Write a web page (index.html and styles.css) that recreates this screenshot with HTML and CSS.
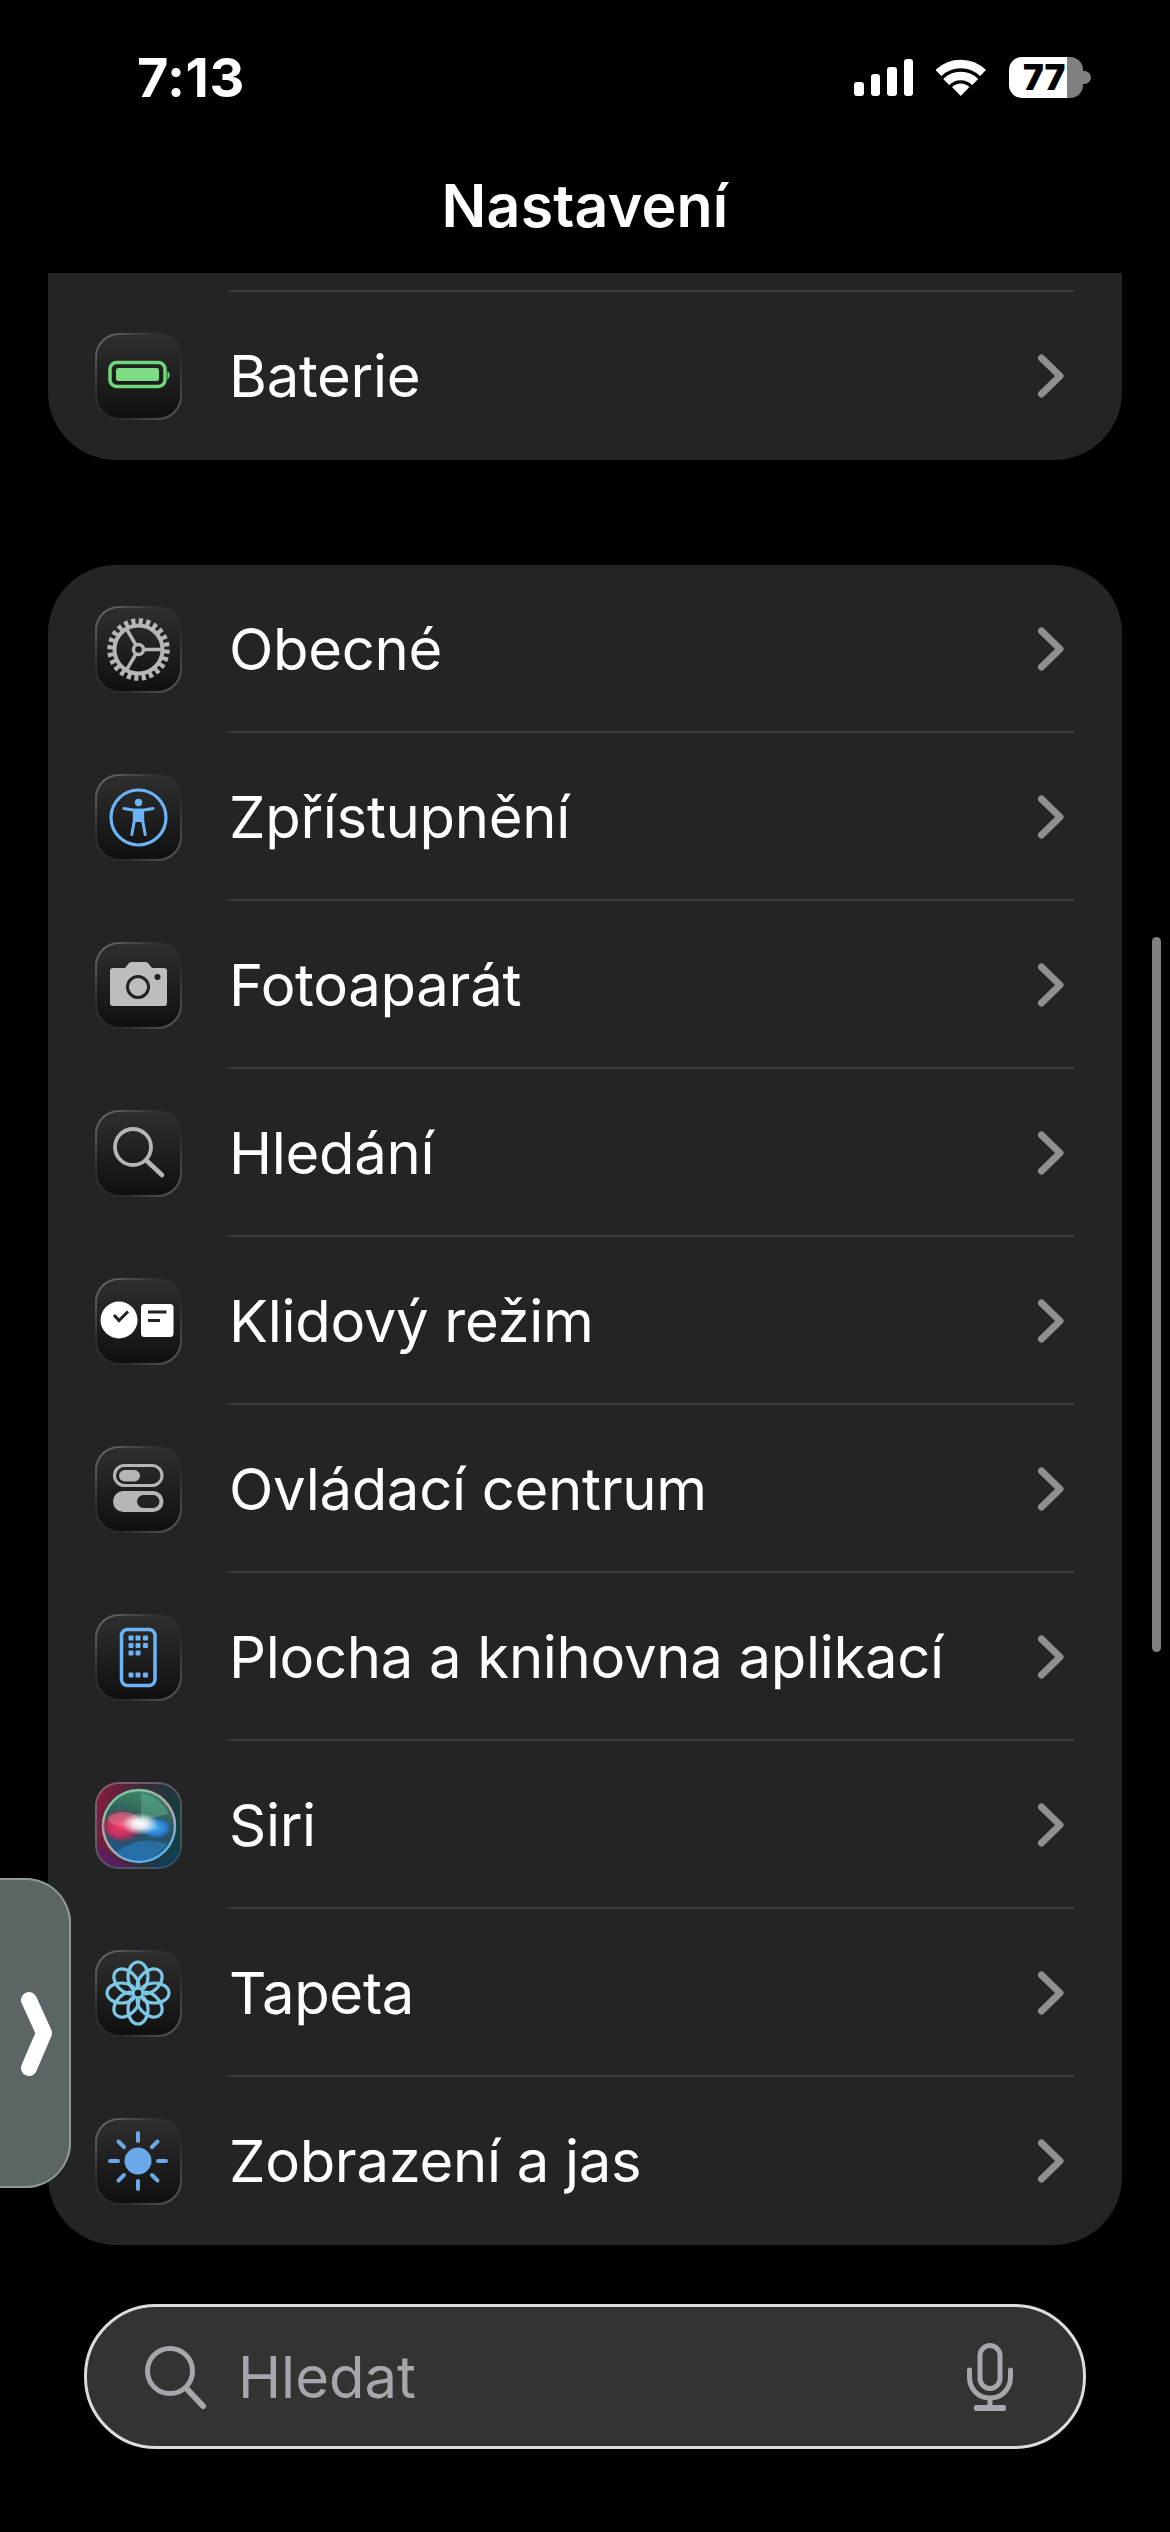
FILE: index.html
```html
<!DOCTYPE html>
<html lang="cs">
<head>
<meta charset="utf-8">
<title>Nastavení</title>
<link rel="stylesheet" href="styles.css">
</head>
<body>
<svg class="sprite" width="0" height="0" aria-hidden="true">
  <defs>
    <symbol id="chev" viewBox="0 0 30 48"><path d="M7.500 6 L26 24 L7.500 42" fill="none" stroke="#8e8e93" stroke-width="7" stroke-linecap="round" stroke-linejoin="round"/></symbol>
    <radialGradient id="siriRed" cx="0.45" cy="0.5" r="0.5"><stop offset="0" stop-color="#f8406e"/><stop offset=".65" stop-color="#d82c5c" stop-opacity=".85"/><stop offset="1" stop-color="#b02050" stop-opacity=".2"/></radialGradient>
    <radialGradient id="siriBlue" cx="0.5" cy="0.5" r="0.5"><stop offset="0" stop-color="#3fb0f8"/><stop offset=".7" stop-color="#2a80e0" stop-opacity=".8"/><stop offset="1" stop-color="#1a60c0" stop-opacity=".15"/></radialGradient>
    <radialGradient id="siriCore" cx="0.5" cy="0.5" r="0.5"><stop offset="0" stop-color="#fff"/><stop offset=".4" stop-color="#fff" stop-opacity=".85"/><stop offset="1" stop-color="#fff" stop-opacity="0"/></radialGradient>
    <linearGradient id="siriBg" x1="0" y1="0.2" x2="1" y2="0.4"><stop offset="0" stop-color="#8a1a40"/><stop offset=".5" stop-color="#3a2a3c"/><stop offset="1" stop-color="#123f3e"/></linearGradient>
    <linearGradient id="siriBall" x1="0.6" y1="0" x2="0.4" y2="1"><stop offset="0" stop-color="#3f8a6c"/><stop offset=".5" stop-color="#2c4f54"/><stop offset="1" stop-color="#1f5a92"/></linearGradient>
    <linearGradient id="siriRim" x1="0.2" y1="0" x2="0.8" y2="1"><stop offset="0" stop-color="#68d49c"/><stop offset=".5" stop-color="#c8a0a8"/><stop offset="1" stop-color="#44b4f4"/></linearGradient>
  </defs>
</svg>
<div class="screen">
  <header class="status">
    <span class="time">7:13</span>
    <div class="status-right">
      <div class="signal"><i class="bar bar1"></i><i class="bar bar2"></i><i class="bar bar3"></i><i class="bar bar4"></i></div>
      <svg class="wifi" width="50" height="38" viewBox="0 0 50 38"><path d="M2.400 14 A32 32 0 0 1 47 14" fill="none" stroke="#fff" stroke-width="8.500"/><path d="M10.200 23 A20.500 20.500 0 0 1 39.200 23" fill="none" stroke="#fff" stroke-width="8.500"/><path d="M24.700 37 L16 28 A12.500 12.500 0 0 1 33.400 28 Z" fill="#fff"/></svg>
      <div class="battery"><div class="battery-body"><span class="battery-num">77</span></div><i class="battery-cap"></i></div>
    </div>
  </header>
  <h1 class="title">Nastavení</h1>

  <section class="card card-top">
    <div class="peek"></div>
    <div class="row">
      <div class="icon"><svg viewBox="0 0 87 87"><rect x="15" y="29.500" width="55" height="24" rx="6.500" fill="none" stroke="#6fd878" stroke-width="3.500"/><rect x="21" y="35" width="43" height="13" rx="2.500" fill="#7ddc84"/><path d="M72.500 38 Q77 41.500 72.500 47 Z" fill="#6fd878"/></svg></div>
      <div class="row-body last"><span class="label">Baterie</span><svg class="chev"><use href="#chev"/></svg></div>
    </div>
  </section>

  <section class="card card-main">
    <div class="row">
      <div class="icon"><svg viewBox="0 0 87 87"><circle cx="43.500" cy="43.500" r="27.500" fill="none" stroke="#b6b6b6" stroke-width="7.500" stroke-dasharray="4 3.200"/><circle cx="43.500" cy="43.500" r="24" fill="none" stroke="#b6b6b6" stroke-width="4"/><path d="M43.500 43.500 H68 M43.500 43.500 L31.200 22.300 M43.500 43.500 L31.200 64.700" stroke="#b6b6b6" stroke-width="3.500" fill="none"/><circle cx="43.500" cy="43.500" r="5" fill="#1d1d1d" stroke="#b6b6b6" stroke-width="3.500"/></svg></div>
      <div class="row-body"><span class="label">Obecné</span><svg class="chev"><use href="#chev"/></svg></div>
    </div>
    <div class="row">
      <div class="icon"><svg viewBox="0 0 87 87"><circle cx="43.500" cy="43.500" r="27.500" fill="none" stroke="#6cb4f8" stroke-width="3.200"/><circle cx="43.500" cy="28.500" r="3.700" fill="#6cb4f8"/><path d="M29 34.500 L38 36 H49 L58 34.500 M39.300 37 V47 L36.800 60.500 M47.700 37 V47 L50.200 60.500" fill="none" stroke="#6cb4f8" stroke-width="3" stroke-linecap="round" stroke-linejoin="round"/><path d="M39.300 36 H47.700 V48 H39.300 Z" fill="#6cb4f8"/></svg></div>
      <div class="row-body"><span class="label">Zpřístupnění</span><svg class="chev"><use href="#chev"/></svg></div>
    </div>
    <div class="row">
      <div class="icon"><svg viewBox="0 0 87 87"><path d="M18 26 H30 L34 21 Q35 20 37 20 H50 Q52 20 53 21 L57 26 H69 Q72 26 72 29 V61 Q72 64 69 64 H18 Q15 64 15 61 V29 Q15 26 18 26 Z" fill="#bdbdbd"/><circle cx="43" cy="45" r="10.500" fill="none" stroke="#222" stroke-width="3"/><circle cx="62.500" cy="35" r="3" fill="#222"/></svg></div>
      <div class="row-body"><span class="label">Fotoaparát</span><svg class="chev"><use href="#chev"/></svg></div>
    </div>
    <div class="row">
      <div class="icon"><svg viewBox="0 0 87 87"><circle cx="38" cy="37" r="18" fill="none" stroke="#b6b6b6" stroke-width="3.800"/><path d="M52 51 L67 65" stroke="#b6b6b6" stroke-width="4.500" stroke-linecap="round"/></svg></div>
      <div class="row-body"><span class="label">Hledání</span><svg class="chev"><use href="#chev"/></svg></div>
    </div>
    <div class="row">
      <div class="icon"><svg viewBox="0 0 87 87"><circle cx="24" cy="42" r="18.500" fill="#fff"/><path d="M19 37 L24 42.500 L33 33.500" fill="none" stroke="#222" stroke-width="3"/><rect x="46" y="26" width="32.500" height="33" rx="3.500" fill="#fff"/><path d="M53 34 H71.500 M53 42.500 H65" stroke="#222" stroke-width="2.800"/></svg></div>
      <div class="row-body"><span class="label">Klidový režim</span><svg class="chev"><use href="#chev"/></svg></div>
    </div>
    <div class="row">
      <div class="icon"><svg viewBox="0 0 87 87"><rect x="19.500" y="19.500" width="47.500" height="20" rx="10" fill="none" stroke="#b6b6b6" stroke-width="3"/><rect x="24" y="24" width="21" height="11.500" rx="5.700" fill="#b6b6b6"/><rect x="18" y="45" width="50.500" height="21" rx="10.500" fill="#b6b6b6"/><rect x="42" y="49" width="22.500" height="13" rx="6.500" fill="#222"/></svg></div>
      <div class="row-body"><span class="label">Ovládací centrum</span><svg class="chev"><use href="#chev"/></svg></div>
    </div>
    <div class="row">
      <div class="icon"><svg viewBox="0 0 87 87"><rect x="26.500" y="15.500" width="33.500" height="56" rx="6" fill="none" stroke="#6cb4f8" stroke-width="3.500"/><g fill="#6cb4f8"><rect x="33.500" y="21.500" width="5" height="5" rx="1"/><rect x="40.500" y="21.500" width="5" height="5" rx="1"/><rect x="48" y="21.500" width="5" height="5" rx="1"/><rect x="33.500" y="29" width="5" height="5" rx="1"/><rect x="40.500" y="29" width="5" height="5" rx="1"/><rect x="48" y="29" width="5" height="5" rx="1"/><rect x="33.500" y="36.500" width="5" height="5" rx="1"/><rect x="40.500" y="36.500" width="5" height="5" rx="1"/><rect x="33.500" y="58.500" width="5" height="5" rx="1"/><rect x="40.500" y="58.500" width="5" height="5" rx="1"/><rect x="48" y="58.500" width="5" height="5" rx="1"/></g></svg></div>
      <div class="row-body"><span class="label">Plocha a knihovna aplikací</span><svg class="chev"><use href="#chev"/></svg></div>
    </div>
    <div class="row">
      <div class="icon icon-siri"><svg viewBox="0 0 87 87"><rect width="87" height="87" fill="url(#siriBg)"/><path d="M0 60 Q20 85 60 87 H0 Z" fill="#5a1c70" opacity=".7"/><path d="M87 60 Q70 85 40 87 H87 Z" fill="#123c60" opacity=".8"/><circle cx="44" cy="44" r="36" fill="url(#siriBall)" stroke="url(#siriRim)" stroke-width="2.500"/><ellipse cx="28" cy="44" rx="20" ry="16" fill="url(#siriRed)"/><ellipse cx="28" cy="37" rx="15" ry="7" fill="#e8a0b0" opacity=".35"/><ellipse cx="61" cy="46" rx="16" ry="11" fill="url(#siriBlue)"/><path d="M22 70 Q44 52 72 62 Q60 80 42 79 Q30 78 22 70 Z" fill="#2a88d0" opacity=".5"/><path d="M46 11 Q64 14 74 32 Q60 34 46 42 Z" fill="#6ac09c" opacity=".4"/><ellipse cx="45" cy="42" rx="19" ry="11" fill="url(#siriCore)"/></svg></div>
      <div class="row-body"><span class="label">Siri</span><svg class="chev"><use href="#chev"/></svg></div>
    </div>
    <div class="row">
      <div class="icon"><svg viewBox="0 0 87 87"><g fill="none" stroke="#7cc6e6" stroke-width="3.200"><ellipse cx="43" cy="26.500" rx="10" ry="14.500"/><ellipse cx="43" cy="26.500" rx="10" ry="14.500" transform="rotate(45 43 43)"/><ellipse cx="43" cy="26.500" rx="10" ry="14.500" transform="rotate(90 43 43)"/><ellipse cx="43" cy="26.500" rx="10" ry="14.500" transform="rotate(135 43 43)"/><ellipse cx="43" cy="26.500" rx="10" ry="14.500" transform="rotate(180 43 43)"/><ellipse cx="43" cy="26.500" rx="10" ry="14.500" transform="rotate(225 43 43)"/><ellipse cx="43" cy="26.500" rx="10" ry="14.500" transform="rotate(270 43 43)"/><ellipse cx="43" cy="26.500" rx="10" ry="14.500" transform="rotate(315 43 43)"/></g><circle cx="43" cy="43" r="4.500" fill="#1d1d1d" stroke="#7cc6e6" stroke-width="2.500"/></svg></div>
      <div class="row-body"><span class="label">Tapeta</span><svg class="chev"><use href="#chev"/></svg></div>
    </div>
    <div class="row">
      <div class="icon"><svg viewBox="0 0 87 87"><circle cx="43" cy="43" r="13.500" fill="#6aa9ea"/><path d="M43 15 V23 M43 63 V71 M15 43 H23 M63 43 H71 M23.500 23.500 L29 29 M57 57 L62.500 62.500 M23.500 62.500 L29 57 M57 29 L62.500 23.500" stroke="#6aa9ea" stroke-width="4" stroke-linecap="round"/></svg></div>
      <div class="row-body last"><span class="label">Zobrazení a jas</span><svg class="chev"><use href="#chev"/></svg></div>
    </div>
  </section>

  <div class="search">
    <svg class="search-icon" width="62" height="64" viewBox="0 0 62 64"><circle cx="25" cy="25" r="22.500" fill="none" stroke="#a6a6ad" stroke-width="5"/><path d="M41 42 L58 60" stroke="#a6a6ad" stroke-width="6" stroke-linecap="round"/></svg>
    <span class="search-text">Hledat</span>
    <svg class="mic" width="46" height="68" viewBox="0 0 46 68"><rect x="13" y="2.500" width="20" height="43" rx="10" fill="none" stroke="#a6a6ad" stroke-width="5"/><path d="M2.500 27 V34 C2.500 46 11 55 23 55 C35 55 43.500 46 43.500 34 V27" fill="none" stroke="#a6a6ad" stroke-width="5" stroke-linecap="round"/><path d="M23 55 V64" stroke="#a6a6ad" stroke-width="5"/><rect x="7" y="62" width="32" height="6" rx="2" fill="#a6a6ad"/></svg>
  </div>

  <div class="scrollbar"></div>
  <div class="side-tab"><svg width="71" height="310" viewBox="0 0 71 310"><path d="M29 122 L44 155 L29 190" fill="none" stroke="#fff" stroke-width="16" stroke-linecap="round" stroke-linejoin="round"/></svg></div>
</div>
</body>
</html>
```

FILE: styles.css
```css
* { box-sizing: border-box; }
html, body { margin: 0; padding: 0; background: #000; }
body { font-family: Inter, "Liberation Sans", sans-serif; color: #fff; }
.sprite { position: absolute; }
.screen { position: relative; width: 1170px; height: 2532px; overflow: hidden; background: #000; display: flex; flex-direction: column; }

.status { height: 156px; display: flex; justify-content: space-between; align-items: flex-start; padding: 48px 0 0 137px; }
.time { font-size: 54px; font-weight: 700; line-height: 60px; letter-spacing: 0.5px; }
.status-right { display: flex; align-items: flex-start; margin-right: 79px; margin-top: 9px; }
.signal { display: flex; align-items: flex-end; gap: 7px; height: 37px; margin-top: 2px; }
.bar { display: block; width: 9.5px; background: #fff; border-radius: 3px; }
.bar1 { height: 14px; }
.bar2 { height: 22px; }
.bar3 { height: 29px; }
.bar4 { height: 37px; }
.wifi { margin-left: 23px; margin-top: 2px; }
.battery { display: flex; align-items: center; margin-left: 23px; }
.battery-body { width: 74px; height: 41px; border-radius: 13px; background: linear-gradient(90deg, #fff 0, #fff 58px, #808080 58px); color: #000; padding-left: 14px; }
.battery-num { font-size: 35px; font-weight: 900; line-height: 41px; display: block; }
.battery-cap { display: block; width: 8px; height: 13px; background: #808080; border-radius: 0 7px 7px 0; }

.title { margin: 0; height: 117px; font-size: 59px; font-weight: 600; line-height: 100px; text-align: center; letter-spacing: 0.2px; }

.card { margin: 0 48px; background: #242426; }
.card-top { border-radius: 0 0 68px 68px; }
.card-main { margin-top: 105px; border-radius: 68px; }
.peek { height: 19px; margin: 0 48px 0 181px; border-bottom: 2px solid #3d3d3f; }

.row { height: 168px; display: flex; align-items: center; padding: 0 48px 0 47px; gap: 47px; }
.icon { flex: none; width: 87px; height: 87px; border-radius: 24px; border: 2px solid transparent; overflow: hidden;
  background: linear-gradient(#2e2e2e, #101010) padding-box, linear-gradient(135deg, #707070, #303030 35%, #2a2a2a 65%, #606060) border-box; }
.icon svg { display: block; width: 87px; height: 87px; margin: -2px; }
.icon-siri { background: linear-gradient(135deg, #7a1838, #123a48) padding-box, linear-gradient(135deg, #8a6070, #305058) border-box; }

.row-body { flex: 1; height: 100%; display: flex; align-items: center; justify-content: space-between; padding: 2px 10px 0 0; border-bottom: 2px solid #3d3d3f; }
.row-body.last { border-bottom-color: transparent; }
.label { font-size: 58px; line-height: 70px; letter-spacing: -0.3px; white-space: nowrap; }
.chev { width: 30px; height: 48px; flex: none; }

.search { margin: 59px 0 0 84px; width: 1002px; height: 145px; border-radius: 72px; background: #333; border: 3px solid #dcdcdc; display: flex; align-items: center; padding: 0 70px 0 58px; }
.search-icon { flex: none; margin-top: 2px; }
.search-text { flex: 1; margin-left: 31px; font-size: 58px; line-height: 70px; color: #a6a6ad; }
.mic { flex: none; }

.scrollbar { position: absolute; left: 1152px; top: 937px; width: 9px; height: 715px; border-radius: 5px; background: #808080; }
.side-tab { position: absolute; left: 0; top: 1878px; width: 71px; height: 310px; background: #5c6565; border-radius: 0 46px 46px 0; box-shadow: inset -2px 0 0 #8e9a9a, inset 0 2px 0 #8e9a9a, inset 0 -2px 0 #8e9a9a; }
.side-tab svg { display: block; }
```
